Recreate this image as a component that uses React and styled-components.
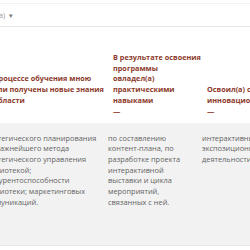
import React from "react";
import styled, { createGlobalStyle } from "styled-components";

const GlobalStyle = createGlobalStyle`
  body {
    margin: 0;
    background: #fff;
    overflow: hidden;
    font-family: "Open Sans", "Noto Sans", sans-serif;
  }
`;

const columns = [
  {
    width: 126,
    head: ["В процессе обучения мною", "были получены новые знания", "в области"],
    body: [
      "стратегического планирования",
      "как важнейшего метода",
      "стратегического управления",
      "библиотекой;",
      "конкурентоспособности",
      "библиотеки; маркетинговых",
      "коммуникаций.",
    ],
  },
  {
    width: 94,
    head: ["В результате освоения", "программы", "овладел(а)", "практическими", "навыками"],
    body: [
      "по составлению",
      "контент-плана, по",
      "разработке проекта",
      "интерактивной",
      "выставки и цикла",
      "мероприятий,",
      "связанных с ней.",
    ],
  },
  {
    width: 140,
    head: ["Освоил(а) самостоятельно", "инновационные формы"],
    body: ["интерактивные формы", "экспозиционно-выставочной", "деятельности библиотеки."],
  },
];

const App = () => {
  return (
    <>
      <GlobalStyle />
      <Page>
        <SelectBox>
          <SelectText>Руководитель(а)</SelectText>
          <Caret>▾</Caret>
        </SelectBox>
        <Table>
          <HeadRow>
            {columns.map((col, i) => (
              <HeadCell key={i} $width={col.width}>
                {col.head.map((line, j) => (
                  <Line key={j}>{line}</Line>
                ))}
                <Dash>—</Dash>
              </HeadCell>
            ))}
          </HeadRow>
          <BodyRow>
            {columns.map((col, i) => (
              <BodyCell key={i} $width={col.width}>
                {col.body.map((line, j) => (
                  <Line key={j}>{line}</Line>
                ))}
              </BodyCell>
            ))}
          </BodyRow>
        </Table>
      </Page>
    </>
  );
};

const Page = styled.div`
  width: 250px;
  height: 250px;
  overflow: hidden;
`;

const SelectBox = styled.div`
  display: flex;
  align-items: center;
  gap: 4px;
  height: 22px;
  margin: 3px 0 0 -60px;
  width: 400px;
  border-top: 1px solid #f2f2f2;
  border-bottom: 1px solid #e8e8e8;
  padding-left: 8px;
`;

const SelectText = styled.span`
  font-size: 7.2px;
  color: #9a9a9a;
`;

const Caret = styled.span`
  font-size: 7px;
  color: #777;
`;

const Table = styled.div`
  margin: 25px 0 0 -18px;
  width: 400px;
`;

const HeadRow = styled.div`
  display: flex;
  align-items: flex-end;
  padding-bottom: 7px;
`;

const HeadCell = styled.div`
  flex: 0 0 ${(p) => p.$width}px;
  box-sizing: border-box;
  padding-left: 5px;
  font-size: 7.3px;
  font-weight: 700;
  line-height: 10.7px;
  color: #8c3a2b;
`;

const Dash = styled.div`
  line-height: 10px;
`;

const BodyRow = styled.div`
  display: flex;
  background: #f2f2f2;
  height: 123px;
  padding-top: 10px;
  box-sizing: border-box;
  border-bottom: 1px solid #e6e6e6;
`;

const BodyCell = styled.div`
  flex: 0 0 ${(p) => p.$width}px;
  font-size: 7.4px;
  line-height: 10.7px;
  color: #646464;
`;

const Line = styled.div`
  white-space: nowrap;
`;

export default App;
